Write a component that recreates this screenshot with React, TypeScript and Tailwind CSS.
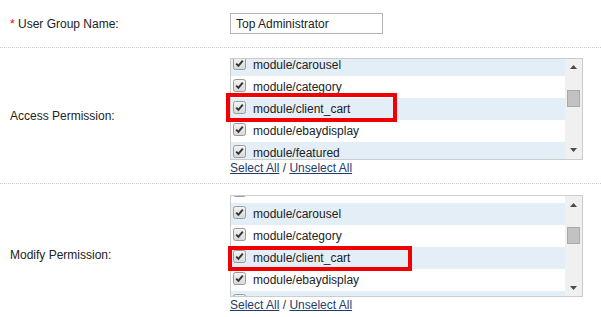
import React from 'react';

const modules = [
    'module/banner',
    'module/carousel',
    'module/category',
    'module/client_cart',
    'module/ebaydisplay',
    'module/featured',
    'module/information',
];

function CheckBox() {
    return (
        <svg width="13" height="13" viewBox="0 0 13 13" className="shrink-0 self-start mt-[3px]">
            <defs>
                <linearGradient id="cbg" x1="0" y1="0" x2="0" y2="1">
                    <stop offset="0" stopColor="#f4f4f4" />
                    <stop offset="1" stopColor="#d8d8d8" />
                </linearGradient>
            </defs>
            <rect x="0.5" y="0.5" width="12" height="12" rx="2" fill="url(#cbg)" stroke="#9a9a9a" />
            <path d="M3.2 6.6 L5.4 8.9 L9.8 3.6" fill="none" stroke="#333" strokeWidth="1.9" />
        </svg>
    );
}

function ScrollBar() {
    return (
        <div className="w-[17px] bg-[#f0f0f0] flex flex-col shrink-0">
            <div className="h-[17px] flex items-center justify-center">
                <svg width="7" height="4" viewBox="0 0 7 4">
                    <path d="M0 4 L3.5 0 L7 4 Z" fill="#4a4a4a" />
                </svg>
            </div>
            <div className="flex-1">
                <div className="mt-[14px] ml-[2px] w-[13px] h-[17px] bg-[#c2c2c2] border border-[#a9a9a9]" />
            </div>
            <div className="h-[17px] flex items-center justify-center">
                <svg width="7" height="4" viewBox="0 0 7 4">
                    <path d="M0 0 L7 0 L3.5 4 Z" fill="#4a4a4a" />
                </svg>
            </div>
        </div>
    );
}

interface ScrollBoxProps {
    offset: string;
    highlight: string;
}

function ScrollBox({ offset, highlight }: ScrollBoxProps) {
    return (
        <div className="relative w-[353px]">
            <div className="h-[102px] border border-[#cccccc] flex bg-white">
                <div className="flex-1 overflow-hidden">
                    <div className={offset}>
                        {modules.map((m, i) => (
                            <div
                                key={m}
                                className={`h-[22px] flex items-center pl-[2px] ${i % 2 === 1 ? 'bg-[#e4eef7]' : 'bg-white'}`}
                            >
                                <CheckBox />
                                <span className="ml-[7px]">{m}</span>
                            </div>
                        ))}
                    </div>
                </div>
                <ScrollBar />
            </div>
            <div className={highlight} />
        </div>
    );
}

function Links() {
    return (
        <div className="h-[14px] leading-[14px] mt-px">
            <a href="#" className="text-[#1f3c6d] underline">Select All</a>
            <span className="text-[#333]"> / </span>
            <a href="#" className="text-[#1f3c6d] underline">Unselect All</a>
        </div>
    );
}

export default function App() {
    return (
        <div className="w-[601px] h-[317px] bg-white text-[12px] text-[#222] overflow-hidden font-['Liberation_Sans',Arial,sans-serif]">
            <div className="flex items-center h-[48px] border-b border-dotted border-[#c8c8c8]">
                <div className="w-[230px] pl-[10px]">
                    <span className="text-[#f00]">*</span> User Group Name:
                </div>
                <div className="w-[153px] h-[21px] border border-[#b4b4b4] flex items-center pl-[5px]">
                    Top Administrator
                </div>
            </div>

            <div className="flex items-center h-[136px] border-b border-dotted border-[#c8c8c8]">
                <div className="w-[230px] pl-[10px]">Access Permission:</div>
                <div className="pt-[10px] pb-[9px]">
                    <ScrollBox
                        offset="-mt-[27px]"
                        highlight="absolute left-[-4px] top-[35px] w-[171px] h-[29px] border-4 border-[#f00000]"
                    />
                    <Links />
                </div>
            </div>

            <div className="flex items-start h-[133px]">
                <div className="w-[230px] pl-[10px] mt-[62px]">Modify Permission:</div>
                <div className="pt-[11px]">
                    <ScrollBox
                        offset="-mt-[15px]"
                        highlight="absolute left-[-2px] top-[51px] w-[184px] h-[25px] border-4 border-[#f00000]"
                    />
                    <Links />
                </div>
            </div>
        </div>
    );
}
